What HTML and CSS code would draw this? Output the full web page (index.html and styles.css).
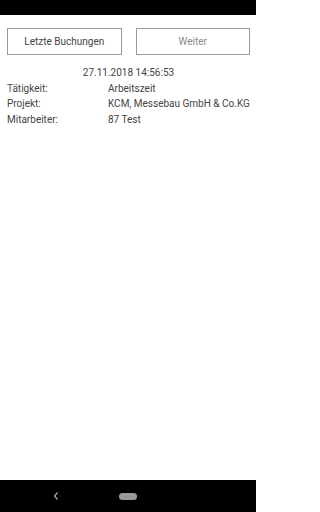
FILE: index.html
```html
<!DOCTYPE html>
<html>
<head>
<meta charset="utf-8">
<link rel="stylesheet" href="styles.css">
</head>
<body>
<div class="status"></div>
<main class="content">
  <div class="buttons">
    <div class="btn">Letzte Buchungen</div>
    <div class="btn disabled">Weiter</div>
  </div>
  <div class="date">27.11.2018 14:56:53</div>
  <div class="row"><span class="label">Tätigkeit:</span><span class="value">Arbeitszeit</span></div>
  <div class="row"><span class="label">Projekt:</span><span class="value">KCM, Messebau GmbH &amp; Co.KG</span></div>
  <div class="row"><span class="label">Mitarbeiter:</span><span class="value">87 Test</span></div>
</main>
<nav class="navbar">
  <svg class="back" width="8" height="10" viewBox="0 0 8 10"><path d="M5.5 1.5 L2.5 5 L5.5 8.5" fill="none" stroke="#aaa" stroke-width="1.2"/></svg>
  <div class="pill"></div>
</nav>
</body>
</html>
```
FILE: styles.css
```css
html, body { margin: 0; padding: 0; }
html { background: #fff; }
body {
  width: 256px;
  height: 512px;
  display: flex;
  flex-direction: column;
  background: #fff;
  font-family: Roboto, "Liberation Sans", sans-serif;
  font-size: 10px;
  color: #444;
  overflow: hidden;
}
.status { height: 15px; background: #000; flex: none; }
.content { flex: 1; padding: 13px 6px 0 7px; }
.buttons { display: grid; grid-template-columns: 1fr 1fr; gap: 14px; }
.btn {
  height: 25px;
  border: 1px solid #999;
  display: flex;
  align-items: center;
  justify-content: center;
  color: #444;
  font-size: 10px;
}
.btn.disabled { color: #888; }
.date { text-align: center; margin-top: 10px; line-height: 16px; }
.row { display: flex; line-height: 15.3px; }
.label { width: 101px; flex: none; }
.navbar {
  height: 32px;
  flex: none;
  background: #000;
  position: relative;
}
.back { position: absolute; left: 52px; top: 11px; }
.pill { position: absolute; left: 119px; top: 13px; width: 18px; height: 7px; border-radius: 4px; background: #999; }
```
